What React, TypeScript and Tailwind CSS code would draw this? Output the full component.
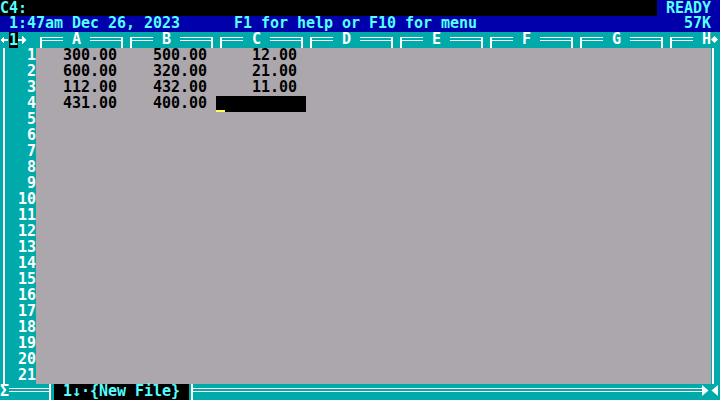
import React from 'react';

// DOS palette
const TEAL = 'bg-[#00aaaa]';
const CYAN = 'text-[#55ffff]';

const sheet: string[][] = [
  ['300.00', '500.00', '12.00'],
  ['600.00', '320.00', '21.00'],
  ['112.00', '432.00', '11.00'],
  ['431.00', '400.00', ''],
];

const letters = ['A', 'B', 'C', 'D', 'E', 'F', 'G'];
const rowNums = Array.from({ length: 21 }, (_, i) => i + 1);

// ╒══ + blank cell
const HeadLeft = () => (
  <svg width="36" height="16" shapeRendering="crispEdges" className="block shrink-0">
    <rect x="4" y="5" width="2" height="11" fill="#fff" />
    <rect x="4" y="5" width="23" height="1" fill="#fff" />
    <rect x="6" y="8" width="21" height="1" fill="#fff" />
  </svg>
);

// blank cell + ═══╕
const HeadRight = () => (
  <svg width="45" height="16" shapeRendering="crispEdges" className="block shrink-0">
    <rect x="9" y="5" width="33" height="1" fill="#fff" />
    <rect x="9" y="8" width="31" height="1" fill="#fff" />
    <rect x="40" y="5" width="2" height="11" fill="#fff" />
  </svg>
);

const Arrow = ({ dir }: { dir: 'left' | 'right' }) => (
  <svg width="9" height="16" shapeRendering="crispEdges" className="block shrink-0">
    {dir === 'left' ? (
      <>
        <rect x="1" y="7" width="7" height="2" fill="#fff" />
        <polygon points="0,8 4,4 4,12" fill="#fff" />
      </>
    ) : (
      <>
        <rect x="0" y="7" width="7" height="2" fill="#fff" />
        <polygon points="8,8 4,4 4,12" fill="#fff" />
      </>
    )}
  </svg>
);

const Cell = ({ value, cursor }: { value: string; cursor?: boolean }) => (
  <div className={`relative h-[16px] w-[90px] shrink-0 pr-[9px] text-right ${cursor ? 'bg-black' : ''}`}>
    {value}
    {cursor && <div className="absolute bottom-0 left-0 h-[2px] w-[9px] bg-[#ffff55]" />}
  </div>
);

export default function App() {
  return (
    <div className="flex h-[400px] w-[720px] flex-col overflow-hidden bg-black font-['DejaVu_Sans_Mono',monospace] text-[15px] font-bold leading-[14px] tracking-[-0.03px]">
      {/* input line */}
      <div className="flex h-[16px] leading-[16px]">
        <div className={`flex-1 bg-black ${CYAN}`}>C4:</div>
        <div className={`w-[63px] bg-[#0000aa] pl-[9px] ${CYAN}`}>READY</div>
      </div>

      {/* status line */}
      <div className={`h-[16px] whitespace-pre bg-[#0000aa] ${CYAN}`}>
        {' 1:47am Dec 26, 2023      F1 for help or F10 for menu                       57K '}
      </div>

      {/* column headings */}
      <div className={`flex h-[16px] ${TEAL}`}>
        <div className="flex w-[36px] shrink-0 text-white">
          <Arrow dir="left" />
          <span className={`w-[9px] bg-black text-center leading-[16px] ${CYAN}`}>1</span>
          <Arrow dir="right" />
        </div>
        {letters.map((l) => (
          <div key={l} className="flex w-[90px] shrink-0">
            <HeadLeft />
            <span className="w-[9px] text-center text-white">{l}</span>
            <HeadRight />
          </div>
        ))}
        <div className="flex w-[45px] shrink-0">
          <HeadLeft />
          <span className="w-[9px] text-center text-white">H</span>
        </div>
        <svg width="9" height="16" className="block shrink-0">
          <polygon points="3.5,4 7,7.5 3.5,11 0,7.5" fill="#fff" />
        </svg>
      </div>

      {/* sheet body */}
      <div className="flex h-[336px]">
        <div className={`flex w-[36px] shrink-0 pl-[3px] ${TEAL}`}>
          <div className="w-[2px] bg-white" />
          <div className="flex flex-1 flex-col text-right text-white">
            {rowNums.map((n) => (
              <div key={n} className="h-[16px]">{n}</div>
            ))}
          </div>
        </div>
        <div className="flex w-[675px] shrink-0 flex-col bg-[#aca7ac] text-black">
          {rowNums.map((n, i) => (
            <div key={n} className="flex h-[16px]">
              {sheet[i] &&
                sheet[i].map((v, c) => <Cell key={c} value={v} cursor={i === 3 && c === 2} />)}
            </div>
          ))}
        </div>
        <div className={`w-[9px] shrink-0 pl-[1px] ${TEAL}`}>
          <div className="h-full w-[2px] bg-white" />
        </div>
      </div>

      {/* sheet tabs / scroll bar */}
      <div className={`flex h-[16px] ${TEAL}`}>
        <span className="w-[9px] shrink-0 text-center text-white">Σ</span>
        <svg width="45" height="16" shapeRendering="crispEdges" className="block shrink-0">
          <rect x="0" y="4" width="42" height="1" fill="#fff" />
          <rect x="0" y="7" width="40" height="1" fill="#fff" />
          <rect x="40" y="0" width="2" height="16" fill="#fff" />
        </svg>
        <div className={`w-[135px] shrink-0 whitespace-pre bg-black pl-[9px] ${CYAN}`}>1↓·{'{New File}'}</div>
        <svg width="513" height="16" shapeRendering="crispEdges" className="block shrink-0">
          <rect x="2" y="0" width="2" height="16" fill="#fff" />
          <rect x="4" y="4" width="509" height="1" fill="#fff" />
          <rect x="4" y="7" width="509" height="1" fill="#fff" />
        </svg>
        <svg width="18" height="16" className="block shrink-0">
          <polygon points="0,1 0,12 6.5,6.5" fill="#fff" />
          <polygon points="16,1 16,12 9.5,6.5" fill="#fff" />
        </svg>
      </div>
    </div>
  );
}
